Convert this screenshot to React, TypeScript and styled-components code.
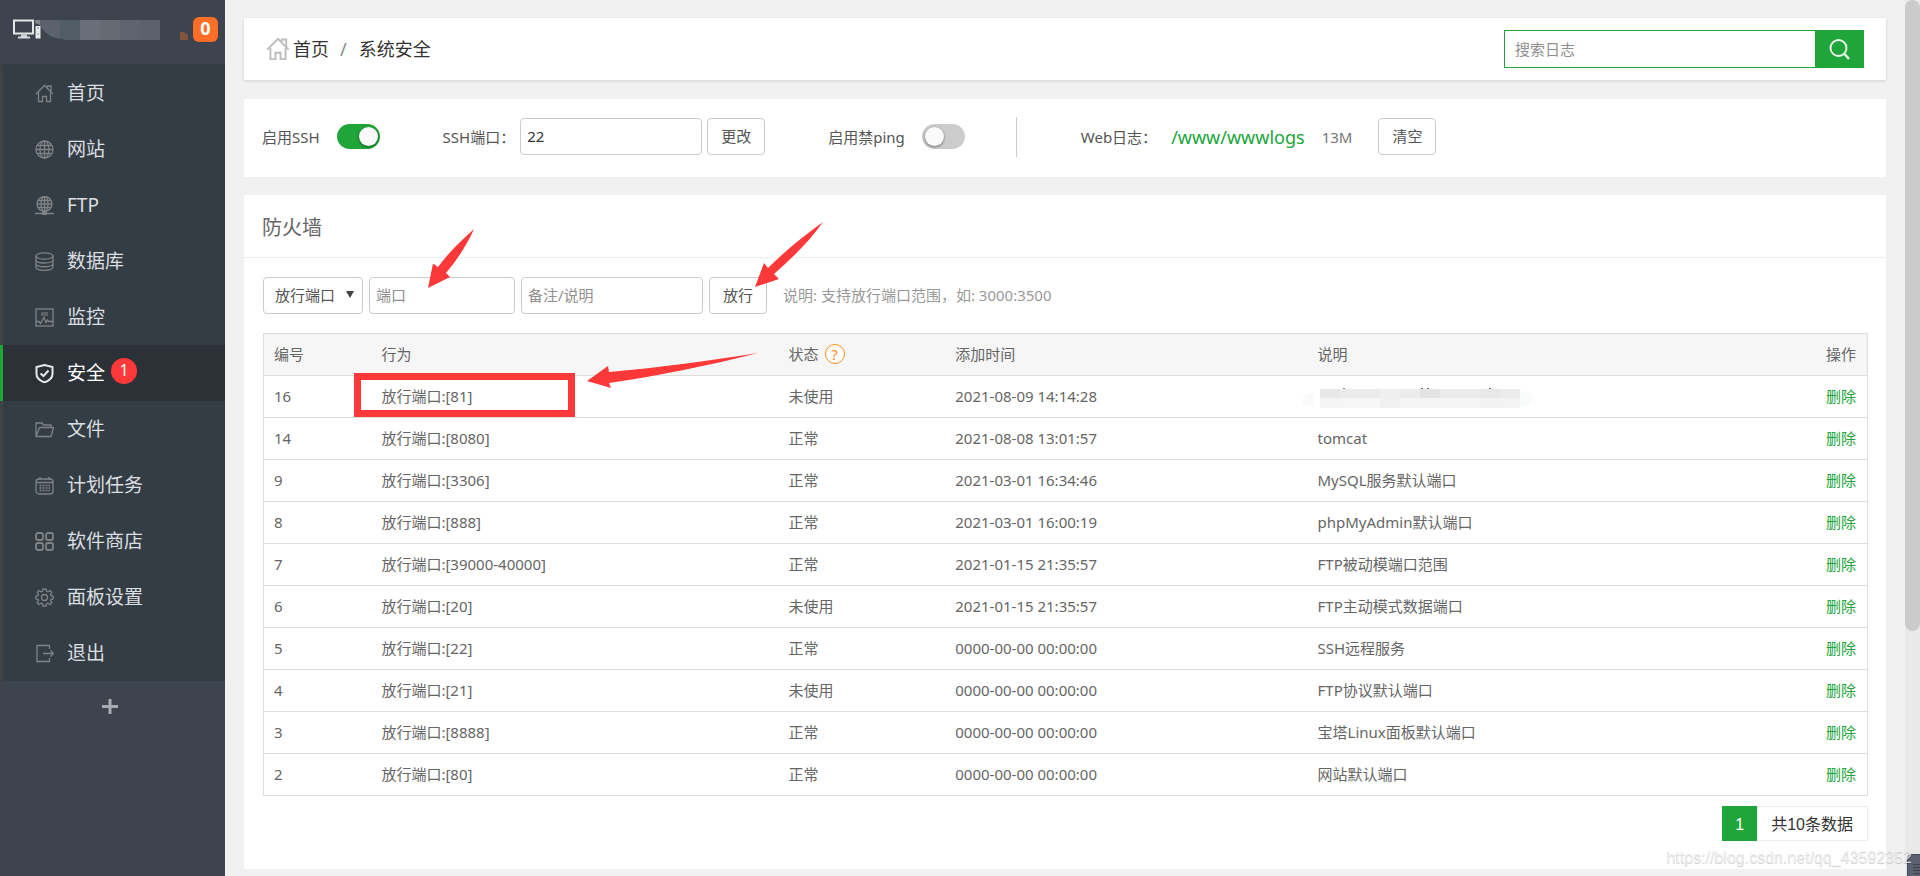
import React from "react";
import styled, { createGlobalStyle, css } from "styled-components";

const GREEN = "#20a53a";
const RED = "#fc3838";
const SANS = `"Noto Sans", "Noto Sans CJK SC", sans-serif`;

const GlobalStyle = createGlobalStyle`
  *, *::before, *::after { box-sizing: border-box; }
  body {
    margin: 0;
    background: #f1f1f1;
    color: #555;
    font: 15px/22px ${SANS};
  }
  button, input, select { font: inherit; color: inherit; margin: 0; }
  a { color: inherit; text-decoration: none; }
`;

/* ---------- page frame ---------- */

const Shell = styled.div`
  display: flex;
  min-height: 100vh;
`;

const Sidebar = styled.aside`
  flex: 0 0 225px;
  background: #3d444d;
`;

const Main = styled.main`
  flex: 1;
  min-width: 0;
  display: flex;
  flex-direction: column;
  gap: 18px;
  padding: 18px 19px 6px;
`;

const ScrollTrack = styled.div`
  flex: 0 0 15px;
  background: #e9e9e9;
`;

const ScrollThumb = styled.div`
  height: 72vh;
  border-radius: 8px;
  background: #cbcbcb;
`;

const FloatingTab = styled.div`
  position: fixed;
  right: 0;
  bottom: 0;
  width: 13px;
  height: 22px;
  padding: 9px 0 0 5px;
  border: 1px solid #454c5e;
  border-width: 1px 0 0 1px;
  border-radius: 5px 0 0 0;
  background: #5a6070;
`;

const FloatingGrip = styled.div`
  height: 13px;
  background: repeating-linear-gradient(#3c4250 0 1px, #5a6070 1px 3px);
`;

/* ---------- sidebar ---------- */

const Brand = styled.div`
  height: 64px;
  display: flex;
  align-items: flex-start;
  padding: 17px 7px 0 13px;
`;

const BrandIcon = styled.svg`
  position: relative;
  flex: none;
  width: 28px;
  height: 24px;
`;

const MaskedName = styled.svg`
  flex: none;
  width: 144px;
  height: 24px;
  margin-left: -6px;
`;

const MaskedBadge = styled.svg`
  flex: none;
  width: 8px;
  height: 8px;
  margin: 15px 0 0 1px;
`;

const MessageCount = styled.a`
  width: 25px;
  height: 25px;
  margin-left: auto;
  border-radius: 6px;
  background: #ff6e26;
  color: #fff;
  font-size: 18px;
  font-weight: 700;
  line-height: 23px;
  text-align: center;
`;

const Menu = styled.ul`
  list-style: none;
  margin: 0;
  padding: 1px 0 0;
  background: #353d44;
`;

const MenuLink = styled.a<{ $active?: boolean }>`
  display: flex;
  align-items: center;
  height: 56px;
  padding: 0 0 0 32px;
  border-left: 3px solid ${(p) => (p.$active ? GREEN : "#414141")};
  background: ${(p) => (p.$active ? "#2c3138" : "transparent")};
  color: ${(p) => (p.$active ? "#fff" : "#dcdfe1")};
  font-size: 19px;
  svg {
    width: 19px;
    height: 19px;
    margin-right: 13px;
    fill: none;
    stroke: ${(p) => (p.$active ? "#e6e8ea" : "#7f8386")};
    stroke-width: ${(p) => (p.$active ? 2 : 1.3)};
  }
`;

const Marker = styled.span`
  width: 26px;
  height: 26px;
  margin: 0 0 4px 6px;
  border-radius: 50%;
  background: ${RED};
  color: #fff;
  font-size: 16px;
  line-height: 25px;
  text-align: center;
`;

const AddEntry = styled.button`
  display: block;
  margin: 15px auto 0 99px;
  padding: 0;
  width: 22px;
  height: 22px;
  border: 0;
  background: none;
  svg { display: block; }
`;

/* ---------- top bar ---------- */

const TopBar = styled.header`
  display: flex;
  align-items: center;
  justify-content: space-between;
  height: 62px;
  padding: 0 22px;
  margin-bottom: 1px;
  background: #fff;
  box-shadow: 0 1px 3px rgba(0, 0, 0, 0.14);
`;

const Crumbs = styled.nav`
  display: flex;
  align-items: center;
  color: #333;
  font-size: 18px;
  svg { margin-right: 3px; }
`;

const CrumbSlash = styled.span`
  margin: 0 12px 0 11px;
  color: #888;
`;

const SearchForm = styled.form`
  display: flex;
  width: 360px;
  height: 38px;
`;

const SearchInput = styled.input`
  flex: 1;
  min-width: 0;
  padding: 0 10px;
  border: 1px solid ${GREEN};
  border-right: 0;
  background: #fff;
  outline: none;
  &::placeholder { color: #909090; opacity: 1; }
`;

const SearchButton = styled.button`
  flex: 0 0 49px;
  display: flex;
  align-items: center;
  justify-content: center;
  padding: 0;
  border: 0;
  background: ${GREEN};
`;

/* ---------- controls ---------- */

const fieldBox = css`
  height: 37px;
  border: 1px solid #ccc;
  border-radius: 4px;
  background: #fff;
`;

const TextInput = styled.input<{ $width: number }>`
  ${fieldBox}
  width: ${(p) => p.$width}px;
  padding: 0 7px 2px 6px;
  outline: none;
  color: #333;
  &::placeholder { color: #909090; opacity: 1; }
`;

const Button = styled.button`
  ${fieldBox}
  width: 58px;
  padding: 0 0 2px;
  text-align: center;
`;

const SelectWrap = styled.span`
  position: relative;
  display: block;
  &::after {
    content: "";
    position: absolute;
    right: 9px;
    top: 14px;
    border: 4px solid transparent;
    border-top: 7px solid #444;
    border-bottom: 0;
    pointer-events: none;
  }
`;

const Select = styled.select`
  ${fieldBox}
  width: 100px;
  padding: 0 0 2px 11px;
  appearance: none;
`;

const Switch = styled.input.attrs({ type: "checkbox", role: "switch" })`
  appearance: none;
  width: 43px;
  height: 25px;
  border-radius: 13px;
  background: #ccc;
  &::before {
    content: "";
    display: block;
    width: 19px;
    height: 19px;
    margin: 3px;
    border-radius: 50%;
    background: #fafafa;
    box-shadow: 0 1px 3px rgba(0, 0, 0, 0.45);
  }
  &:checked { background: ${GREEN}; }
  &:checked::before { margin-left: 22px; }
`;

/* ---------- settings strip ---------- */

const SettingsPanel = styled.section`
  display: flex;
  align-items: center;
  height: 78px;
  padding: 0 18px 3px;
  background: #fff;
`;

const Setting = styled.div<{ $gap?: number }>`
  display: flex;
  align-items: center;
  gap: ${(p) => p.$gap ?? 17}px;
  margin-right: 63px;
`;

const Divider = styled.span`
  width: 1px;
  height: 40px;
  margin: 0 64px 0 -12px;
  background: #ccc;
`;

const LogPath = styled.a`
  margin-left: -3px;
  color: ${GREEN};
  font-size: 18px;
`;

const LogSize = styled.span`
  margin-right: 9px;
  color: #777;
`;

/* ---------- firewall ---------- */

const Firewall = styled.section`
  background: #fff;
`;

const Title = styled.h2`
  margin: 0;
  padding: 18px 18px 15px;
  border-bottom: 1px solid #eee;
  color: #666;
  font-size: 20px;
  font-weight: 400;
  line-height: 29px;
`;

const Body = styled.div`
  padding: 19px 18px 28px 19px;
`;

const RuleForm = styled.form`
  display: flex;
  align-items: center;
  gap: 6px;
  margin-bottom: 19px;
`;

const Anchor = styled.span`
  position: relative;
  display: block;
`;

const Hint = styled.span`
  margin-left: 10px;
  padding-bottom: 2px;
  color: #999;
`;

const TableFrame = styled.div`
  border: 1px solid #ddd;
`;

const RuleTable = styled.table`
  width: 100%;
  table-layout: fixed;
  border-collapse: collapse;
  color: #666;
  th, td {
    height: 42px;
    padding: 0 10px 1px;
    border-bottom: 1px solid #ddd;
    font-weight: 400;
    text-align: left;
    white-space: nowrap;
  }
  th { height: 41px; background: #f6f6f6; }
  tr:last-child td { border-bottom: 0; }
  th:last-child, td:last-child { padding-right: 11px; text-align: right; }
`;

const HelpMark = styled.button`
  width: 20px;
  height: 20px;
  margin-left: 6px;
  padding: 0;
  border: 1px solid #ff8c1a;
  border-radius: 50%;
  background: #fff;
  color: #ff8c1a;
  line-height: 18px;
  text-align: center;
`;

const DeleteLink = styled.a`
  color: ${GREEN};
`;

const Highlight = styled.span`
  position: absolute;
  left: -27px;
  top: -12px;
  width: 221px;
  height: 44px;
  border: 7px solid ${RED};
`;

const Arrow = styled.svg<{ $left: number; $top: number }>`
  position: absolute;
  left: ${(p) => p.$left}px;
  top: ${(p) => p.$top}px;
  fill: ${RED};
  pointer-events: none;
  overflow: visible;
`;

const MaskedNote = styled.svg`
  display: block;
  margin: 4px 0 0 -16px;
`;

const Pager = styled.div`
  display: flex;
  justify-content: flex-end;
  margin-top: 10px;
  color: #333;
  font: 16px/33px "Liberation Sans", "Noto Sans CJK SC", sans-serif;
`;

const PageNumber = styled.span`
  width: 35px;
  height: 35px;
  padding-top: 1px;
  background: ${GREEN};
  border: 1px solid ${GREEN};
  color: #fff;
  text-align: center;
`;

const Total = styled.span`
  height: 35px;
  padding: 1px 14px 0 13px;
  border: 1px solid #ececec;
`;

const Watermark = styled.div`
  position: fixed;
  right: 8px;
  bottom: 6px;
  color: rgba(255, 255, 255, 0.8);
  font: 16px/24px "Liberation Sans", sans-serif;
  text-shadow: 0 1px 1px rgba(0, 0, 0, 0.2), 0 0 1px rgba(0, 0, 0, 0.18);
`;

/* ---------- icons ---------- */

const HousePath = () => (
  <>
    <path d="M1 10 9.500 1.500 18 10" />
    <path d="M3.500 8.500V17.500H7.500V12.500H11.500V17.500H15.500V8.500" />
    <path d="M12.500 3.500V2H16V7.500" />
  </>
);

const Globe = () => (
  <>
    <circle cx="9.500" cy="9.500" r="8.500" />
    <ellipse cx="9.500" cy="9.500" rx="4.500" ry="8.500" />
    <path d="M9.500 1V18M1 9.500H18M2.500 5.500H16.500M2.500 13.500H16.500" />
  </>
);

const icons: Record<string, React.ReactNode> = {
  home: <HousePath />,
  site: <Globe />,
  ftp: (
    <>
      <circle cx="9.500" cy="8" r="7.500" />
      <ellipse cx="9.500" cy="8" rx="3.500" ry="7.500" />
      <path d="M9.500 .5V15.500M2 8H17M3 4.500H16M3 11.500H16" />
      <path d="M0 17.500H19" strokeWidth="1.500" />
      <path d="M7 17.500H12" strokeWidth="3" />
    </>
  ),
  database: (
    <>
      <ellipse cx="9.500" cy="4" rx="8.500" ry="3.200" />
      <path d="M1 4V15C1 19.500 18 19.500 18 15V4M1 8C1 12 18 12 18 8M1 11.500C1 15.800 18 15.800 18 11.500" />
    </>
  ),
  monitor: (
    <>
      <rect x="1" y="1" width="17" height="17" />
      <path d="M6 5H13M6 7H13" opacity=".7" />
      <path d="M1 13.500H4L5.500 15.500 9 9.500 11 14.500 12.500 12 13.500 13.500H18" />
    </>
  ),
  shield: (
    <>
      <path d="M9.500 1 17.500 3V10C17.500 14.500 13.500 17 9.500 18.500 5.500 17 1.500 14.500 1.500 10V3Z" />
      <path d="M5.500 9.500 8.500 12 13.500 6.500" />
    </>
  ),
  folder: (
    <path d="M1 16.500V3H7L8.500 5H16V7.500M1 16.500 4.500 7.500H18.500L16 16.500Z" strokeLinejoin="round" />
  ),
  calendar: (
    <>
      <rect x="1" y="3" width="17" height="15" rx="3" />
      <path d="M1 6.500H18M5 1V4M14 1V4" />
      <path d="M4.500 9.500H15M4.500 12H15M4.500 14.500H15" strokeDasharray="2 1" />
    </>
  ),
  apps: (
    <>
      <rect x="1" y="1" width="7" height="7" rx="2" strokeWidth="1.800" />
      <rect x="11" y="1" width="7" height="7" rx="2" strokeWidth="1.800" />
      <rect x="1" y="11" width="7" height="7" rx="2" strokeWidth="1.800" />
      <rect x="11" y="11" width="7" height="7" rx="2" strokeWidth="1.800" />
    </>
  ),
  gear: (
    <>
      <circle cx="9.500" cy="9.500" r="3" />
      <path
        strokeLinejoin="round"
        d="M8 1H11L11.500 3.200 13 3.800 15 2.500 16.800 4.500 15.500 6.300 16 7.700 18.200 8.200V10.800L16 11.300 15.500 12.700 16.800 14.700 15 16.500 13 15.200 11.500 15.800 11 18H8L7.500 15.800 6 15.200 4 16.500 2.200 14.700 3.500 12.700 3 11.300 .8 10.800V8.200L3 7.700 3.500 6.300 2.200 4.500 4 2.500 6 3.800 7.500 3.200Z"
      />
    </>
  ),
  exit: (
    <>
      <path d="M14.500 5V1.500H2V17.500H14.500V14" />
      <path d="M8 9.500H18M15.500 6.500 18.500 9.500 15.500 12.500" />
    </>
  ),
};

/* ---------- data ---------- */

const menu = [
  { icon: "home", label: "首页" },
  { icon: "site", label: "网站" },
  { icon: "ftp", label: "FTP" },
  { icon: "database", label: "数据库" },
  { icon: "monitor", label: "监控" },
  { icon: "shield", label: "安全", active: true, marker: "1" },
  { icon: "folder", label: "文件" },
  { icon: "calendar", label: "计划任务" },
  { icon: "apps", label: "软件商店" },
  { icon: "gear", label: "面板设置" },
  { icon: "exit", label: "退出" },
];

const rules = [
  { id: 16, port: "81", status: "未使用", time: "2021-08-09 14:14:28", note: null },
  { id: 14, port: "8080", status: "正常", time: "2021-08-08 13:01:57", note: "tomcat" },
  { id: 9, port: "3306", status: "正常", time: "2021-03-01 16:34:46", note: "MySQL服务默认端口" },
  { id: 8, port: "888", status: "正常", time: "2021-03-01 16:00:19", note: "phpMyAdmin默认端口" },
  { id: 7, port: "39000-40000", status: "正常", time: "2021-01-15 21:35:57", note: "FTP被动模端口范围" },
  { id: 6, port: "20", status: "未使用", time: "2021-01-15 21:35:57", note: "FTP主动模式数据端口" },
  { id: 5, port: "22", status: "正常", time: "0000-00-00 00:00:00", note: "SSH远程服务" },
  { id: 4, port: "21", status: "未使用", time: "0000-00-00 00:00:00", note: "FTP协议默认端口" },
  { id: 3, port: "8888", status: "正常", time: "0000-00-00 00:00:00", note: "宝塔Linux面板默认端口" },
  { id: 2, port: "80", status: "正常", time: "0000-00-00 00:00:00", note: "网站默认端口" },
];

const nameBlocks = ["#5b626b", "#525d68", "#696f79", "#666a72", "#60646f", "#5c626c"];

const noteBlocks = [
  ["#e8e8e8", "#f5f5f5"],
  ["#ebebeb", "#f6f6f6"],
  ["#ebebeb", "#f6f6f6"],
  ["#eeeff0", "#f0f0f1"],
  ["#ececec", "#f5f5f5"],
  ["#e5e4e4", "#f5f5f5"],
  ["#ebebeb", "#f5f5f5"],
  ["#ebebeb", "#f5f5f5"],
  ["#e8e8e8", "#f2f2f2"],
  ["#ebebeb", "#f3f3f3"],
];

/* ---------- page ---------- */

export default function App() {
  return (
    <>
      <GlobalStyle />
      <Shell>
        <Sidebar>
          <Brand>
            <BrandIcon viewBox="0 0 28 24" aria-hidden="true">
              <rect x="1" y="3.500" width="19" height="13" fill="none" stroke="#e4e6e8" strokeWidth="2" />
              <path d="M8 17.500H14V19.500H17V21.500H5V19.500H8Z" fill="#d4d7da" />
              <rect x="22.500" y="9" width="5" height="12.500" fill="#e8eaec" />
              <path d="M24 11H26M24 17H26" stroke="#8b9097" />
            </BrandIcon>
            <MaskedName viewBox="0 0 144 24" aria-hidden="true">
              {nameBlocks.map((fill, i) => (
                <rect key={i} x={i * 20 + 5} y="3" width="20" height="20" fill={fill} />
              ))}
              <path d="M0 3H5V8L0 6Z" fill="#80858c" />
              <path d="M5 9 10 15 17 20 31 23H5Z" fill="#3d444d" />
            </MaskedName>
            <MaskedBadge viewBox="0 0 8 8" aria-hidden="true">
              <path d="M0 0H4L8 3V8H0Z" fill="#80543f" />
            </MaskedBadge>
            <MessageCount href="#messages">0</MessageCount>
          </Brand>
          <Menu>
            {menu.map((item) => (
              <li key={item.label}>
                <MenuLink href={`#${item.icon}`} $active={item.active}>
                  <svg viewBox="0 0 19 19" aria-hidden="true">{icons[item.icon]}</svg>
                  {item.label}
                  {item.marker && <Marker>{item.marker}</Marker>}
                </MenuLink>
              </li>
            ))}
          </Menu>
          <AddEntry type="button" aria-label="添加">
            <svg width="22" height="22" viewBox="0 0 22 22" stroke="#a9adb1" strokeWidth="3" aria-hidden="true">
              <path d="M3 10.500H19M11 3V18" />
            </svg>
          </AddEntry>
        </Sidebar>

        <Main>
          <TopBar>
            <Crumbs>
              <svg width="24" height="24" viewBox="0 0 19 19" fill="none" stroke="#bdbdbd" strokeWidth="1.500" aria-hidden="true">
                <HousePath />
              </svg>
              <a href="#home">首页</a>
              <CrumbSlash>/</CrumbSlash>
              <a href="#shield">系统安全</a>
            </Crumbs>
            <SearchForm>
              <SearchInput type="text" placeholder="搜索日志" aria-label="搜索日志" />
              <SearchButton type="button" aria-label="搜索">
                <svg width="21" height="21" viewBox="0 0 21 21" fill="none" stroke="#e8f6ea" strokeWidth="2" aria-hidden="true">
                  <circle cx="9.500" cy="9" r="8" />
                  <path d="M15 14.500 20 20" strokeWidth="2.500" />
                </svg>
              </SearchButton>
            </SearchForm>
          </TopBar>

          <SettingsPanel>
            <Setting>
              <label htmlFor="ssh">启用SSH</label>
              <Switch id="ssh" defaultChecked />
            </Setting>
            <Setting $gap={5}>
              <label htmlFor="ssh-port">SSH端口：</label>
              <TextInput id="ssh-port" $width={182} defaultValue="22" />
              <Button type="button">更改</Button>
            </Setting>
            <Setting>
              <label htmlFor="ping">启用禁ping</label>
              <Switch id="ping" />
            </Setting>
            <Divider />
            <Setting>
              <span>Web日志：</span>
              <LogPath href="#wwwlogs">/www/wwwlogs</LogPath>
              <LogSize>13M</LogSize>
              <Button type="button">清空</Button>
            </Setting>
          </SettingsPanel>

          <Firewall>
            <Title>防火墙</Title>
            <Body>
              <RuleForm>
                <SelectWrap>
                  <Select aria-label="规则类型">
                    <option>放行端口</option>
                  </Select>
                </SelectWrap>
                <Anchor>
                  <TextInput $width={146} placeholder="端口" aria-label="端口" />
                  <Arrow $left={59} $top={-48} width="46" height="59" viewBox="0 0 46 59" aria-hidden="true">
                    <path d="M0 59 5 34.500 10 38 C20 24 34 11 46 0 C38 18 28 32 18 44L22 48Z" />
                  </Arrow>
                </Anchor>
                <TextInput $width={182} placeholder="备注/说明" aria-label="备注/说明" />
                <Anchor>
                  <Button type="button">放行</Button>
                  <Arrow $left={46} $top={-55} width="68" height="65" viewBox="0 0 68 65" aria-hidden="true">
                    <path d="M0 65 9 41 13 46 C30 29 50 13 68 0 C54 20 36 37 19 52L24 57Z" />
                  </Arrow>
                </Anchor>
                <Hint>说明: 支持放行端口范围，如: 3000:3500</Hint>
              </RuleForm>

              <TableFrame>
                <RuleTable>
                  <colgroup>
                    <col width="6.7%" />
                    <col width="25.4%" />
                    <col width="10.4%" />
                    <col width="22.6%" />
                    <col />
                    <col width="10%" />
                  </colgroup>
                  <thead>
                    <tr>
                      <th>编号</th>
                      <th>行为</th>
                      <th>
                        状态
                        <HelpMark type="button" aria-label="状态说明">?</HelpMark>
                      </th>
                      <th>添加时间</th>
                      <th>说明</th>
                      <th>操作</th>
                    </tr>
                  </thead>
                  <tbody>
                    {rules.map((rule, i) => (
                      <tr key={rule.id}>
                        <td>{rule.id}</td>
                        <td>
                          <Anchor>
                            放行端口:[{rule.port}]
                            {i === 0 && (
                              <>
                                <Highlight />
                                <Arrow $left={206} $top={-32} width="171" height="35" viewBox="0 0 171 35" aria-hidden="true">
                                  <path d="M0 28 21 13 22 19 C70 15 120 8 171 0 C120 13 70 23 22 30L24 35Z" />
                                </Arrow>
                              </>
                            )}
                          </Anchor>
                        </td>
                        <td>{rule.status}</td>
                        <td>{rule.time}</td>
                        <td>
                          {rule.note ?? (
                            <MaskedNote width="232" height="26" viewBox="0 0 232 26" aria-hidden="true">
                              <path d="M0 14Q4 8 12 8V21H5Q0 20 0 14Z" fill="#fafafa" />
                              <path d="M218 6Q231 6 231 14T218 22Z" fill="#fafbfb" />
                              {noteBlocks.map(([top, bottom], n) => (
                                <React.Fragment key={n}>
                                  <rect x={18 + n * 20} y="4" width="20" height="9" fill={top} />
                                  <rect x={18 + n * 20} y="13" width="20" height="10" fill={bottom} />
                                </React.Fragment>
                              ))}
                              <path d="M41 3.500H43M119 3.500H121M125 3.500H127M187 3.500H189" stroke="#777" />
                            </MaskedNote>
                          )}
                        </td>
                        <td>
                          <DeleteLink href="#delete">删除</DeleteLink>
                        </td>
                      </tr>
                    ))}
                  </tbody>
                </RuleTable>
              </TableFrame>

              <Pager>
                <PageNumber>1</PageNumber>
                <Total>共10条数据</Total>
              </Pager>
            </Body>
          </Firewall>
        </Main>

        <ScrollTrack>
          <ScrollThumb />
        </ScrollTrack>
      </Shell>
      <FloatingTab>
        <FloatingGrip />
      </FloatingTab>
      <Watermark>https://blog.csdn.net/qq_43592352</Watermark>
    </>
  );
}
